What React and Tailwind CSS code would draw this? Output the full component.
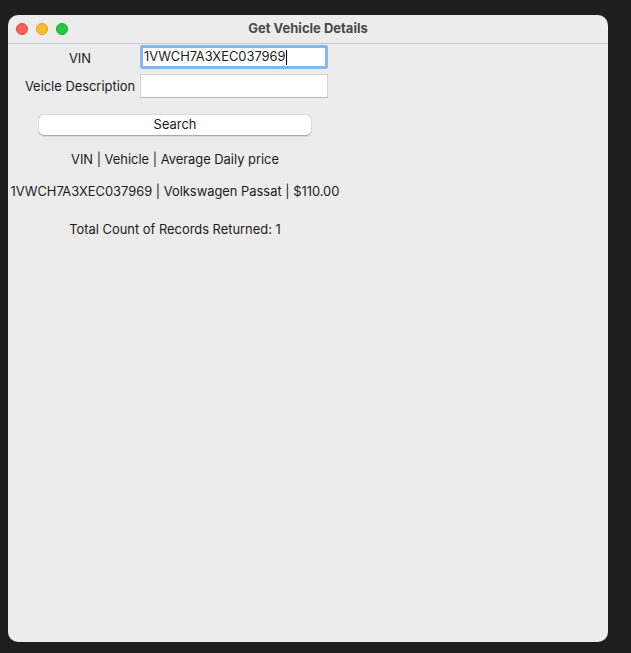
export default function App() {
  const font = { fontFamily: 'Inter, "Noto Sans", sans-serif' };
  return (
    <div className="w-[631px] h-[653px] bg-[#1e1e1e] pt-[15px] pl-[8px]" style={font}>
      <div className="w-[600px] h-[627px] bg-[#ececec] rounded-[10px] overflow-hidden flex flex-col">
        <div className="h-[29px] flex items-center border-b border-[#c8c8c8] relative shrink-0">
          <div className="flex items-center gap-[8px] pl-[8px]">
            <span className="w-[12px] h-[12px] rounded-full bg-[#fe5f57] border border-[#e2463f]" />
            <span className="w-[12px] h-[12px] rounded-full bg-[#febc2e] border border-[#e1a116]" />
            <span className="w-[12px] h-[12px] rounded-full bg-[#28c840] border border-[#14ae2c]" />
          </div>
          <div className="absolute inset-0 flex items-center justify-center text-[13px] font-bold text-[#4a4a4a]">
            Get Vehicle Details
          </div>
        </div>
        <div className="w-[334px] flex flex-col items-center text-[12.9px] text-[#1c1c1c]">
          <div className="w-full flex items-center pl-[12px] h-[24px] mt-[1px]">
            <div className="w-[120px] text-center pt-[3px]">VIN</div>
            <div className="w-[188px] h-[24px] rounded-[2px] border-[3px] border-[#83b8ee] bg-white flex items-center pl-[1px]">
              <span>1VWCH7A3XEC037969</span>
              <span className="w-[1px] h-[15px] bg-black" />
            </div>
          </div>
          <div className="w-full flex items-center pl-[12px] h-[24px] mt-[5px]">
            <div className="w-[120px] text-center pt-[2px]">Veicle Description</div>
            <div className="w-[188px] h-[24px] bg-white border border-[#d4d4d4] border-b-[#b8b8b8]" />
          </div>
          <button className="mt-[17px] w-[272px] h-[20px] bg-white rounded-[5px] shadow-[0_0.5px_1.5px_rgba(0,0,0,0.35)] text-[12.9px] text-[#1c1c1c] flex items-center justify-center">
            Search
          </button>
          <div className="mt-[17px] h-[16px] leading-[16px] whitespace-nowrap">VIN | Vehicle | Average Daily price</div>
          <div className="mt-[16px] h-[16px] leading-[16px] whitespace-nowrap">1VWCH7A3XEC037969 | Volkswagen Passat | $110.00</div>
          <div className="mt-[22px] h-[16px] leading-[16px] whitespace-nowrap">Total Count of Records Returned: 1</div>
        </div>
      </div>
    </div>
  );
}
